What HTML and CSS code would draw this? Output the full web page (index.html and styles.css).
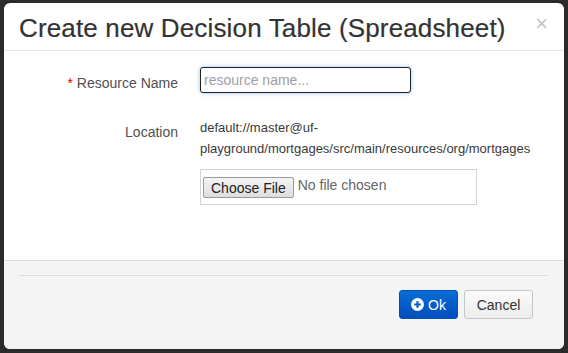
FILE: index.html
```html
<!DOCTYPE html>
<html lang="en">
<head>
    <meta charset="UTF-8">
    <meta name="viewport" content="width=device-width, initial-scale=1.0">
    <title>Create new Decision Table (Spreadsheet)</title>
    <link rel="stylesheet" href="styles.css">
</head>
<body>
    <div class="modal">
        <!-- Intestazione -->
        <div class="modal-header">
            <h3 class="modal-title">Create new Decision Table (Spreadsheet)</h3>
            <button class="close" type="button">&times;</button>
        </div>

        <!-- Form -->
        <div class="modal-body">
            <div class="form-row">
                <label class="form-label label-input" for="resourceName"><span class="required">*</span> Resource Name</label>
                <div class="form-control-wrap">
                    <input type="text" id="resourceName" class="text-input" placeholder="resource name...">
                </div>
            </div>
            <div class="form-row row-location">
                <span class="form-label label-text">Location</span>
                <div class="form-control-wrap">
                    <p class="location">default://master@uf-<br>playground/mortgages/src/main/resources/org/mortgages</p>
                    <div class="file-box">
                        <button class="file-button" type="button">Choose File</button>
                        <span class="file-name">No file chosen</span>
                    </div>
                </div>
            </div>
        </div>

        <!-- Pulsanti -->
        <div class="modal-footer">
            <div class="footer-rule"></div>
            <div class="footer-buttons">
                <button class="btn btn-primary" type="button">
                    <svg class="btn-icon" width="13" height="13" viewBox="0 0 14 14">
                        <circle cx="7" cy="7" r="7" fill="#fff"/>
                        <path d="M7 3.5v7M3.5 7h7" stroke="#0061c6" stroke-width="2.4"/>
                    </svg>
                    Ok
                </button>
                <button class="btn btn-default" type="button">Cancel</button>
            </div>
        </div>
    </div>
</body>
</html>
```

FILE: styles.css
```css
body {
    margin: 0;
    padding: 3px 4px;
    background-color: #2b2b2b;
    font-family: 'Liberation Sans', Arial, sans-serif;
    color: #333;
}

.modal {
    width: 560px;
    height: 346px;
    background-color: #ffffff;
    border-radius: 6px;
    display: flex;
    flex-direction: column;
    overflow: hidden;
}

.modal-header {
    height: 48px;
    box-sizing: border-box;
    border-bottom: 1px solid #e5e5e5;
    padding: 0 16px 0 15px;
    display: flex;
    align-items: center;
    justify-content: space-between;
}

.modal-title {
    margin: 0;
    font-size: 26px;
    font-weight: normal;
    letter-spacing: 0.15px;
    color: #333;
    -webkit-text-stroke: 0.2px #333;
    line-height: 30px;
    padding-top: 2px;
}

.close {
    border: none;
    background: none;
    padding: 0;
    margin-top: -6px;
    font-family: 'Liberation Sans', Arial, sans-serif;
    font-size: 22px;
    line-height: 20px;
    color: #c4c4c4;
    cursor: pointer;
}

.modal-body {
    flex: 1;
    padding: 16px 0 0;
}

.form-row {
    display: grid;
    grid-template-columns: 174px 1fr;
    column-gap: 22px;
}

.row-location {
    margin-top: 24px;
}

.form-label {
    text-align: right;
    font-size: 14px;
    line-height: 20px;
    color: #505050;
}

.label-input {
    padding-top: 6px;
}

.label-text {
    padding-top: 5px;
}

.required {
    color: #e00;
}

.text-input {
    width: 211px;
    height: 26px;
    box-sizing: border-box;
    border: 1px solid #222;
    border-radius: 3px;
    padding: 0 3px;
    font-family: 'Liberation Sans', Arial, sans-serif;
    font-size: 14px;
    color: #333;
    box-shadow: 0 0 4px rgba(102, 175, 233, 0.7);
    outline: none;
}

.text-input::placeholder {
    color: #a0a0a0;
}

.location {
    margin: 0;
    font-size: 13px;
    line-height: 21px;
    color: #3a3a3a;
}

.file-box {
    margin-top: 10px;
    width: 277px;
    height: 36px;
    box-sizing: border-box;
    border: 1px solid #d4d4d4;
    padding: 7px 2px;
    display: flex;
    align-items: flex-start;
}

.file-button {
    height: 21px;
    padding: 0 7px;
    font-family: 'Liberation Sans', Arial, sans-serif;
    font-size: 14px;
    color: #222;
    background: linear-gradient(#f4f4f4, #dedede);
    border: 1px solid #9a9a9a;
    border-radius: 2px;
}

.file-name {
    margin-left: 4px;
    font-size: 14px;
    line-height: 16px;
    color: #666;
}

.modal-footer {
    background-color: #f4f4f4;
    border-top: 1px solid #dcdcdc;
    padding: 14px 16px 30px 15px;
}

.footer-rule {
    border-top: 1px solid #dcdcdc;
    margin-bottom: 14px;
}

.footer-buttons {
    display: flex;
    justify-content: flex-end;
    gap: 6px;
    padding-right: 15px;
}

.btn {
    height: 29px;
    box-sizing: border-box;
    border-radius: 3px;
    font-family: 'Liberation Sans', Arial, sans-serif;
    font-size: 14px;
    display: flex;
    align-items: center;
    justify-content: center;
    cursor: pointer;
}

.btn-primary {
    width: 59px;
    color: #fff;
    background: linear-gradient(#0a6ed6, #004cbc);
    border: 1px solid #0050b4;
}

.btn-icon {
    margin-right: 4px;
}

.btn-default {
    width: 69px;
    color: #333;
    background: linear-gradient(#fafafa, #ededed);
    border: 1px solid #c6c6c6;
}
```
